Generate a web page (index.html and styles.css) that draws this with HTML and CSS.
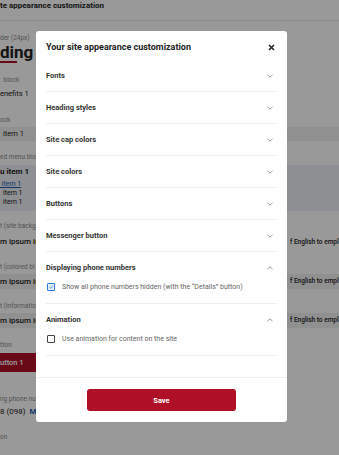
FILE: index.html
```html
<!DOCTYPE html>
<html lang="en">
<head>
    <meta charset="UTF-8">
    <title>Your site appearance customization</title>
    <link rel="stylesheet" href="styles.css">
</head>
<body>
    <div class="page">
        <div class="topbar">te appearance customization</div>

        <div class="lbl lbl-first">der (24px)</div>
        <div class="big-head">ding</div>
        <div class="big-line"></div>

        <div class="lbl lbl-block">&nbsp;block</div>
        <div class="txt txt-benefits">enefits 1</div>

        <div class="lbl lbl-ock">ock</div>
        <div class="band band-item"><span class="pad">item 1</span></div>

        <div class="lbl lbl-menu">ed menu bloc</div>
        <div class="band band-menu">
            <div class="menu-main">u item 1</div>
            <div class="menu-link"><a href="#">&nbsp;item 1</a></div>
            <div class="menu-sub">item 1</div>
            <div class="menu-sub">item 1</div>
        </div>

        <div class="lbl lbl-site">t (site backg</div>
        <div class="row row-plain"><span>m ipsum is</span><span class="tail">f English to empl</span></div>

        <div class="lbl lbl-colored">t (colored bl</div>
        <div class="row band"><span>m ipsum is</span><span class="tail">f English to empl</span></div>

        <div class="lbl lbl-info">t (informatio</div>
        <div class="row band"><span>m ipsum is</span><span class="tail">f English to empl</span></div>

        <div class="lbl lbl-button">tton</div>
        <div class="red-btn">utton 1</div>

        <div class="lbl lbl-phone">ng phone nu</div>
        <div class="txt txt-phone">8 (098)&nbsp; <b>Mo</b></div>

        <div class="lbl lbl-last">on</div>
    </div>

    <div class="overlay">
        <div class="modal">
            <div class="modal-head">
                <span class="modal-title">Your site appearance customization</span>
                <svg class="close" width="7" height="7" viewBox="0 0 7 7"><path d="M1 1L6 6M6 1L1 6" stroke="#222" stroke-width="1.6" fill="none"/></svg>
            </div>

            <div class="acc">
                <div class="acc-item">
                    <div class="acc-head"><span>Fonts</span><svg class="chev" width="6" height="4" viewBox="0 0 6 4"><path d="M0.5 0.8L3 3.2L5.5 0.8" stroke="#777" stroke-width="0.8" fill="none"/></svg></div>
                </div>
                <div class="acc-item">
                    <div class="acc-head"><span>Heading styles</span><svg class="chev" width="6" height="4" viewBox="0 0 6 4"><path d="M0.5 0.8L3 3.2L5.5 0.8" stroke="#777" stroke-width="0.8" fill="none"/></svg></div>
                </div>
                <div class="acc-item">
                    <div class="acc-head"><span>Site cap colors</span><svg class="chev" width="6" height="4" viewBox="0 0 6 4"><path d="M0.5 0.8L3 3.2L5.5 0.8" stroke="#777" stroke-width="0.8" fill="none"/></svg></div>
                </div>
                <div class="acc-item">
                    <div class="acc-head"><span>Site colors</span><svg class="chev" width="6" height="4" viewBox="0 0 6 4"><path d="M0.5 0.8L3 3.2L5.5 0.8" stroke="#777" stroke-width="0.8" fill="none"/></svg></div>
                </div>
                <div class="acc-item">
                    <div class="acc-head"><span>Buttons</span><svg class="chev" width="6" height="4" viewBox="0 0 6 4"><path d="M0.5 0.8L3 3.2L5.5 0.8" stroke="#777" stroke-width="0.8" fill="none"/></svg></div>
                </div>
                <div class="acc-item">
                    <div class="acc-head"><span>Messenger button</span><svg class="chev" width="6" height="4" viewBox="0 0 6 4"><path d="M0.5 0.8L3 3.2L5.5 0.8" stroke="#777" stroke-width="0.8" fill="none"/></svg></div>
                </div>
                <div class="acc-item open">
                    <div class="acc-head"><span>Displaying phone numbers</span><svg class="chev" width="6" height="4" viewBox="0 0 6 4"><path d="M0.5 3.2L3 0.8L5.5 3.2" stroke="#777" stroke-width="0.8" fill="none"/></svg></div>
                    <label class="check">
                        <span class="box checked"><svg width="8" height="8" viewBox="0 0 8 8"><path d="M1.8 4.2L3.4 5.7L6.3 2.4" stroke="#2f7de1" stroke-width="1" fill="none"/></svg></span>
                        Show all phone numbers hidden (with the “Details” button)
                    </label>
                </div>
                <div class="acc-item open">
                    <div class="acc-head"><span>Animation</span><svg class="chev" width="6" height="4" viewBox="0 0 6 4"><path d="M0.5 3.2L3 0.8L5.5 3.2" stroke="#777" stroke-width="0.8" fill="none"/></svg></div>
                    <label class="check">
                        <span class="box"></span>
                        Use animation for content on the site
                    </label>
                </div>
            </div>

            <div class="modal-foot">
                <button type="button" class="save">Save</button>
            </div>
        </div>
    </div>
</body>
</html>
```

FILE: styles.css
```css
body {
    margin: 0;
    font-family: 'Roboto', 'Liberation Sans', sans-serif;
    background-color: #fff;
    color: #222;
    overflow: hidden;
}
.page {
    width: 339px;
    height: 455px;
    overflow: hidden;
}
.topbar {
    height: 20px;
    border-bottom: 1px solid #e4e4e4;
    font-size: 8px;
    font-weight: 700;
    line-height: 11px;
    white-space: nowrap;
}
.lbl {
    font-size: 6.5px;
    line-height: 10px;
    color: #8a8a8a;
    white-space: nowrap;
}
.txt {
    font-size: 7.5px;
    line-height: 10px;
    white-space: nowrap;
}
.lbl-first { margin-top: 12px; }
.big-head {
    font-size: 17px;
    font-weight: 700;
    line-height: 18px;
}
.big-line {
    width: 17px;
    height: 2px;
    background-color: #b01027;
}
.lbl-block { margin-top: 12px; padding-left: 2px; }
.txt-benefits { margin-top: 4px; }
.lbl-ock { margin-top: 16px; }
.band {
    background-color: #f1f1f1;
}
.band-item {
    margin-top: 2px;
    height: 14px;
    font-size: 7.5px;
    line-height: 14px;
}
.pad { padding-left: 3px; }
.lbl-menu { margin-top: 11px; }
.band-menu {
    margin-top: 3px;
    height: 44px;
    padding-top: 2px;
    background-color: #eceef3;
    font-size: 7px;
}
.menu-main {
    font-size: 8px;
    font-weight: 700;
    line-height: 10px;
}
.menu-link {
    margin-top: 3px;
    line-height: 9px;
}
.menu-link a {
    color: #1a5fb4;
}
.menu-sub {
    line-height: 9px;
    padding-left: 3px;
    color: #222;
}
.lbl-site { margin-top: 10px; }
.row {
    display: flex;
    font-size: 8px;
    font-weight: 500;
    white-space: nowrap;
}
.row-plain {
    margin-top: 5px;
    line-height: 12px;
}
.row.band {
    margin-top: 2px;
    height: 15px;
    line-height: 15px;
}
.tail {
    margin-left: auto;
    width: 49px;
    font-size: 6.5px;
}
.lbl-colored { margin-top: 14px; }
.lbl-info { margin-top: 12px; }
.lbl-button { margin-top: 12px; }
.red-btn {
    margin-top: 3px;
    width: 60px;
    height: 19px;
    line-height: 19px;
    background-color: #b01027;
    color: #fff;
    font-size: 7.5px;
    font-weight: 500;
}
.lbl-phone { margin-top: 22px; }
.txt-phone { margin-top: 3px; font-size: 8px; }
.txt-phone b { color: #1a5fb4; }
.lbl-last { margin-top: 15px; }

/* modal */
.overlay {
    position: fixed;
    top: 0;
    left: 0;
    right: 0;
    bottom: 0;
    background-color: rgba(0, 0, 0, 0.4);
    padding: 31px 0 0 36px;
}
.modal {
    width: 251px;
    background: white;
    border-radius: 3px;
}
.modal-head {
    display: flex;
    justify-content: space-between;
    align-items: center;
    padding: 10px 10px 6px;
    height: 13px;
}
.modal-title {
    font-size: 9px;
    font-weight: 700;
    color: #222;
    line-height: 13px;
}
.close {
    margin-right: 2px;
}
.acc {
    margin: 0 10px;
    padding-bottom: 21px;
}
.acc-item {
    border-bottom: 1px solid #eeeeee;
}
.acc-item.open {
    padding-bottom: 9px;
}
.acc-head {
    height: 31px;
    display: flex;
    align-items: center;
    justify-content: space-between;
    font-size: 7.5px;
    font-weight: 700;
    color: #333;
}
.chev {
    margin-right: 4px;
}
.check {
    margin-top: -3px;
    display: flex;
    align-items: center;
    height: 14px;
    font-size: 7px;
    color: #666;
}
.box {
    width: 6px;
    height: 6px;
    margin-left: 1px;
    margin-right: 7px;
    border: 1px solid #444;
    border-radius: 1px;
    display: flex;
    align-items: center;
    justify-content: center;
}
.box.checked {
    border-color: #2f7de1;
    background-color: #e2eefc;
}
.modal-foot {
    border-top: 1px solid #eeeeee;
    padding: 11px 0 11px;
}
.save {
    display: block;
    margin: 0 auto;
    width: 149px;
    height: 22px;
    border: none;
    border-radius: 3px;
    background-color: #b01027;
    color: white;
    font-family: 'Roboto', 'Liberation Sans', sans-serif;
    font-size: 7.5px;
    font-weight: 700;
    cursor: pointer;
}
```
